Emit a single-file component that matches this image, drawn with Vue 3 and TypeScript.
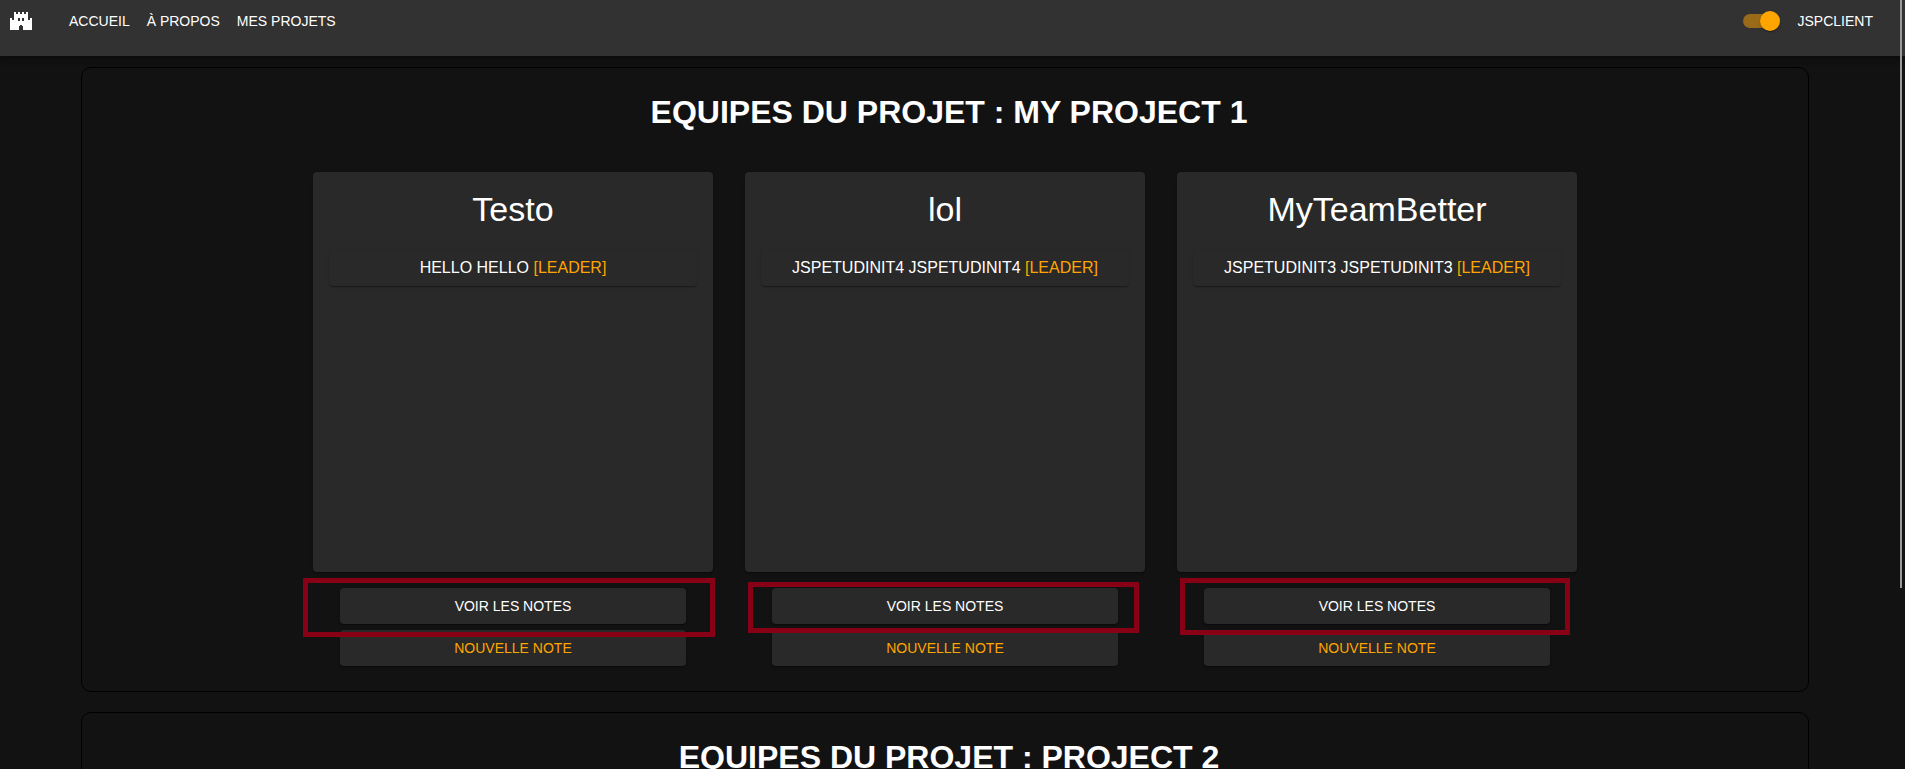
<script setup lang="ts">
import { ref } from 'vue'

interface Team {
  name: string
  leader: string
}

interface Project {
  title: string
  teams: Team[]
}

const darkMode = ref(true)
const links: string[] = ['ACCUEIL', 'À PROPOS', 'MES PROJETS']
const projects: Project[] = [
  {
    title: 'MY PROJECT 1',
    teams: [
      { name: 'Testo', leader: 'HELLO HELLO' },
      { name: 'lol', leader: 'JSPETUDINIT4 JSPETUDINIT4' },
      { name: 'MyTeamBetter', leader: 'JSPETUDINIT3 JSPETUDINIT3' },
    ],
  },
  { title: 'PROJECT 2', teams: [] },
]
</script>

<template>
  <div class="page">
    <header class="bar">
      <a class="logo" href="#" aria-label="Accueil">
        <svg width="22" height="18" viewBox="0 0 22 18" shape-rendering="crispEdges" fill="#fff" aria-hidden="true">
          <path d="M0 6h2v2h2V0h2v2h2V0h2v2h2V0h2v2h2V0h2v8h2V6h2v12h-9v-4h-1v-1h-2v1h-1v4H0zM8 6v3h2V6zM12 6v3h2V6z" fill-rule="evenodd" />
        </svg>
      </a>
      <nav class="links">
        <a v-for="link in links" :key="link" href="#">{{ link }}</a>
      </nav>
      <div class="account">
        <label class="switch">
          <input v-model="darkMode" type="checkbox" aria-label="Mode sombre" />
        </label>
        <a href="#">JSPCLIENT</a>
      </div>
    </header>

    <main class="content">
      <section v-for="project in projects" :key="project.title" class="project">
        <h1>EQUIPES DU PROJET : {{ project.title }}</h1>
        <div v-if="project.teams.length" class="teams">
          <div v-for="(team, index) in project.teams" :key="team.name" class="team">
            <article class="card">
              <h2>{{ team.name }}</h2>
              <p class="member">{{ team.leader }} <span>[LEADER]</span></p>
            </article>
            <div class="actions">
              <button type="button">VOIR LES NOTES</button>
              <button type="button" class="create">NOUVELLE NOTE</button>
              <div class="marker" :class="`marker-${index + 1}`"></div>
            </div>
          </div>
        </div>
      </section>
    </main>
    <div class="thumb"></div>
  </div>
</template>

<style>
body {
  margin: 0;
  background: #121212;
}
</style>

<style scoped>
.page {
  position: relative;
  height: 100vh;
  overflow: hidden;
  background: #121212;
  color: #fff;
  font-family: "Liberation Sans", Arial, sans-serif;
  font-size: 14px;
}
.bar {
  display: flex;
  align-items: flex-start;
  height: 56px;
  box-sizing: border-box;
  padding: 12px 32px 0 10px;
  background: #323232;
  box-shadow: 0 2px 4px -1px rgba(0, 0, 0, 0.2), 0 4px 5px rgba(0, 0, 0, 0.14), 0 1px 10px rgba(0, 0, 0, 0.12);
}
.bar a {
  color: #fff;
  text-decoration: none;
  line-height: 18px;
}
.logo svg {
  display: block;
}
.links {
  display: flex;
  gap: 17px;
  margin-left: 37px;
}
.account {
  display: flex;
  gap: 18px;
  margin-left: auto;
}
.switch {
  display: flex;
  align-items: center;
  height: 18px;
}
.switch input {
  appearance: none;
  position: relative;
  width: 34px;
  height: 14px;
  margin: 0 3px 0 0;
  border-radius: 7px;
  background: #996b19;
}
.switch input::after {
  content: "";
  position: absolute;
  top: -3px;
  right: -3px;
  width: 20px;
  height: 20px;
  border-radius: 50%;
  background: orange;
  box-shadow: 0 2px 1px -1px rgba(0, 0, 0, 0.2), 0 1px 1px rgba(0, 0, 0, 0.14), 0 1px 3px rgba(0, 0, 0, 0.12);
}
.switch input:not(:checked)::after {
  right: 17px;
}
.content {
  display: flex;
  flex-direction: column;
  gap: 20px;
  padding: 11px 96px 0 81px;
}
.project {
  border: 1px solid #000;
  border-radius: 10px;
  padding: 24px 0;
}
h1 {
  margin: 0;
  padding-left: 8px;
  text-align: center;
  font-size: 32px;
  line-height: 40px;
}
.teams {
  display: flex;
  justify-content: center;
  gap: 32px;
  margin-top: 40px;
}
.team {
  flex: 0 1 400px;
}
.card {
  min-height: 400px;
  box-sizing: border-box;
  padding: 16px;
}
.card,
.member,
.actions button {
  border-radius: 4px;
  background: #292929;
  box-shadow: 0 2px 1px -1px rgba(0, 0, 0, 0.2), 0 1px 1px rgba(0, 0, 0, 0.14), 0 1px 3px rgba(0, 0, 0, 0.12);
}
h2 {
  margin: 0 0 20px;
  text-align: center;
  font-size: 34px;
  font-weight: 400;
  line-height: 42px;
}
.member {
  margin: 0;
  text-align: center;
  font-size: 16px;
  line-height: 36px;
}
.member span {
  color: orange;
}
.actions {
  position: relative;
  display: flex;
  flex-direction: column;
  gap: 6px;
  padding: 16px 27px 1px;
}
.actions button {
  height: 36px;
  padding: 0;
  border: 0;
  color: #fff;
  font: inherit;
}
.actions .create {
  color: orange;
}
.marker {
  position: absolute;
  box-sizing: border-box;
  border: 5px solid #880015;
  pointer-events: none;
}
.marker-1 {
  inset: 6px -2px 30px -10px;
}
.marker-2 {
  inset: 10px 6px 34px 3px;
}
.marker-3 {
  inset: 6px 7px 32px 3px;
}
.thumb {
  position: absolute;
  top: 0;
  right: 3px;
  width: 2px;
  height: 76.5%;
  background: #999;
}
</style>
